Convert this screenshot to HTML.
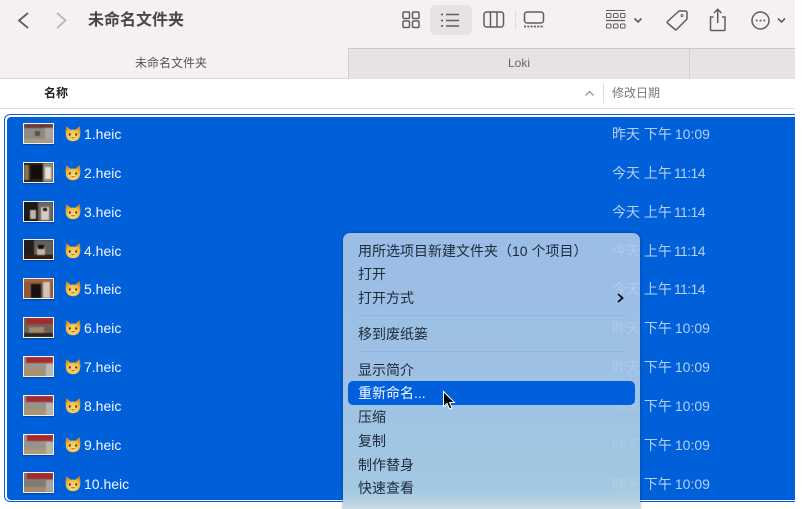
<!DOCTYPE html>
<html lang="zh">
<head>
<meta charset="utf-8">
<title>未命名文件夹</title>
<style>
html,body{margin:0;padding:0;background:#fff}
body{position:relative;width:802px;height:509px;overflow:hidden;font-family:"Liberation Sans","Noto Sans CJK SC",sans-serif;color:#222}
.a{position:absolute;white-space:nowrap}
#win{position:absolute;left:0;top:0;width:795px;height:509px;background:#fff;overflow:hidden}
#bar{left:0;top:0;width:795px;height:48px;background:#f6f1f1}
#tabs{left:0;top:48px;width:795px;height:31px;background:#f6f1f1;border-bottom:1px solid #dcd9d9;box-sizing:border-box}
.tab2{top:48px;height:31px;background:#e7e3e3;border-top:1px solid #c9c6c6;border-left:1px solid #d2cfcf;box-sizing:border-box}
#sel{left:4px;top:114px;width:800px;height:388px;border:1px solid #0a5fd6;border-radius:6px;box-sizing:border-box}
#blue{left:7px;top:117px;width:788px;height:383px;background:#0060d9;border-radius:4px 0 0 4px}
.t{position:absolute;left:84px;color:#f2f6fc;font-size:14px;line-height:20px}
.d{position:absolute;left:612px;color:#b4cff0;font-size:14px;line-height:20px;white-space:nowrap}
.d b{font-weight:400;margin-left:3px}
.d u{text-decoration:none;margin-left:2px;letter-spacing:-.6px}
.th{position:absolute;left:23px;width:31px;height:21px;box-sizing:border-box;border:1px solid #f1f1f1;box-shadow:0 1px 1px rgba(0,0,50,.35);overflow:hidden}
.th i{position:absolute;display:block;filter:blur(.6px)}
.c{position:absolute;left:65px;width:16px;height:17px}
#menu{left:343px;top:233px;width:297px;height:290px;border-radius:7px;background:linear-gradient(#9bbde6 0,#9dc0e4 45%,#a2c8e2 88%,#b1d0e2 92%,#d8e1e6 97%,#dde3e6 100%);box-shadow:0 0 3px rgba(0,0,60,.35)}
.m{position:absolute;left:358px;font-size:14px;line-height:20px;color:#1d2a3a;white-space:nowrap}
.g{position:absolute;left:612px;width:27px;overflow:hidden;color:#aecbe9;font-size:14px;line-height:20px;white-space:nowrap}
.sep{position:absolute;left:358px;width:267px;height:1px;background:#93b6e0}
svg{position:absolute;overflow:visible}
</style>
</head>
<body>
<div id="win">
<div class="a" id="bar"></div>
<div class="a" id="tabs"></div>
<div class="a tab2" style="left:348px;width:342px"></div>
<div class="a tab2" style="left:689px;width:106px"></div>

<svg style="left:0;top:0" width="795" height="48" fill="none" stroke="#5f5d5d" stroke-width="1.5">
<path d="M28 13 L19 20.5 L28 28" stroke-width="1.8"/>
<path d="M57 13 L65.5 20.5 L57 28" stroke="#b5b3b3" stroke-width="1.8"/>
<rect x="430" y="5" width="42" height="30" rx="6" fill="#e7e3e3" stroke="none"/>
<rect x="403" y="12" width="6.5" height="6.5" rx="1.2"/><rect x="412.5" y="12" width="6.5" height="6.5" rx="1.2"/>
<rect x="403" y="21" width="6.5" height="6.5" rx="1.2"/><rect x="412.5" y="21" width="6.5" height="6.5" rx="1.2"/>
<path d="M446 14.5H459M446 20.500H459M446 26H459"/>
<path d="M441 14.500h2M441 20.500h2M441 26h2" stroke-width="1.800"/>
<rect x="484" y="12" width="19.500" height="15" rx="2.500"/><path d="M490.500 12v15M497 12v15"/>
<path d="M515.500 10v20" stroke="#e2dede" stroke-width="1"/>
<rect x="524.500" y="12" width="19" height="11" rx="2.500"/>
<path d="M524 26.500h20" stroke-width="1.800" stroke-dasharray="2 1.300"/>
<path d="M606 10.500h19" stroke-width="1"/>
<rect x="606.500" y="13.500" width="4.500" height="4" rx=".8" stroke-width="1"/><rect x="613.500" y="13.500" width="4.500" height="4" rx=".8" stroke-width="1"/><rect x="620.500" y="13.500" width="4.500" height="4" rx=".8" stroke-width="1"/>
<path d="M606 20.500h19" stroke-width="1.200"/>
<rect x="606.500" y="24" width="4.500" height="4" rx=".8" stroke-width="1"/><rect x="613.500" y="24" width="4.500" height="4" rx=".8" stroke-width="1"/><rect x="620.500" y="24" width="4.500" height="4" rx=".8" stroke-width="1"/>
<path d="M634.500 18.500l3.500 3.500 3.500-3.500" stroke-width="1.600"/>
<path d="M667.500 21.500L679 11h6.500a1.500 1.500 0 0 1 1.500 1.500v6.500L676.500 29.500a1 1 0 0 1-1.400 0L667.500 23a1 1 0 0 1 0-1.500z" stroke-linejoin="round"/>
<circle cx="682" cy="15.500" r="1" stroke-width=".9"/>
<path d="M713.500 17h-3v12.500a1 1 0 0 0 1 1h12.500a1 1 0 0 0 1-1V17h-3M717.700 23V9.500M714 13l3.700-3.700 3.700 3.700"/>
<circle cx="760.500" cy="20.500" r="8.500"/>
<circle cx="756.700" cy="20.500" r="1" fill="#5f5d5d" stroke="none"/><circle cx="760.500" cy="20.500" r="1" fill="#5f5d5d" stroke="none"/><circle cx="764.300" cy="20.500" r="1" fill="#5f5d5d" stroke="none"/>
<path d="M778 18.500l3.500 3.500 3.500-3.500" stroke-width="1.600"/>
</svg>

<div class="a" style="left:88px;top:10px;font-size:16px;line-height:22px;font-weight:700;color:#484646">未命名文件夹</div>
<div class="a" style="left:135px;top:54px;font-size:12px;line-height:18px;color:#555">未命名文件夹</div>
<div class="a" style="left:508px;top:54px;font-size:12px;line-height:18px;color:#666">Loki</div>

<div class="a" style="left:44px;top:84px;font-size:12px;line-height:18px;font-weight:700;color:#222">名称</div>
<div class="a" style="left:612px;top:84px;font-size:12px;line-height:18px;color:#777">修改日期</div>
<div class="a" style="left:603px;top:83px;width:1px;height:20px;background:#dedede"></div>
<svg style="left:585px;top:90px" width="10" height="7" fill="none" stroke="#8a8a8a" stroke-width="1.200"><path d="M.500 5.500L4.500 1.500L8.500 5.500"/></svg>
<div class="a" style="left:0;top:108px;width:795px;height:1px;background:#dfdfdf"></div>

<div class="a" id="sel"></div>
<div class="a" id="blue"></div>

<div class="th" style="top:123px;background:#8f8a85"><i style="left:0;top:0;width:29px;height:4px;background:#6d3a38"></i><i style="left:21px;top:4px;width:8px;height:12px;background:#a9a5a0"></i><i style="left:0;top:15px;width:29px;height:4px;background:#b09a80"></i><i style="left:11px;top:7px;width:5px;height:5px;background:#55504c"></i></div>
<div class="th" style="top:162px;background:#2b2622"><i style="left:7px;top:2px;width:11px;height:14px;background:#100d0b"></i><i style="left:0;top:2px;width:5px;height:15px;background:#8a7150"></i><i style="left:19px;top:0;width:10px;height:19px;background:#8d8880"></i><i style="left:21px;top:4px;width:6px;height:12px;background:#e6dfd2"></i></div>
<div class="th" style="top:201px;background:#1c1a18"><i style="left:14px;top:0;width:15px;height:19px;background:#6a6866"></i><i style="left:6px;top:8px;width:6px;height:9px;background:#c0b4a8"></i><i style="left:17px;top:5px;width:8px;height:13px;background:#d6cbbf"></i><i style="left:19px;top:6px;width:4px;height:3px;background:#111"></i></div>
<div class="th" style="top:239px;background:#201e1c"><i style="left:10px;top:0;width:19px;height:15px;background:#615f5e"></i><i style="left:13px;top:7px;width:8px;height:10px;background:#c8b4a8"></i><i style="left:14px;top:5px;width:6px;height:4px;background:#0c0c0c"></i><i style="left:0;top:15px;width:29px;height:4px;background:#3a1c10"></i></div>
<div class="th" style="top:278px;background:#8f5a3c"><i style="left:7px;top:5px;width:10px;height:14px;background:#17120f"></i><i style="left:19px;top:1px;width:7px;height:18px;background:#cfc6b8"></i><i style="left:0;top:0;width:29px;height:3px;background:#a8633f"></i></div>
<div class="th" style="top:317px;background:#6f6358"><i style="left:2px;top:0;width:27px;height:6px;background:#a52a2e"></i><i style="left:5px;top:9px;width:15px;height:7px;background:#a4886a"></i><i style="left:0;top:15px;width:29px;height:4px;background:#2c2622"></i></div>
<div class="th" style="top:356px;background:#9c958d"><i style="left:2px;top:0;width:27px;height:6px;background:#a72c32"></i><i style="left:0;top:12px;width:20px;height:7px;background:#a98f6c"></i><i style="left:22px;top:7px;width:7px;height:12px;background:#bdb9b4"></i></div>
<div class="th" style="top:395px;background:#98928a"><i style="left:2px;top:0;width:27px;height:6px;background:#a52b30"></i><i style="left:0;top:13px;width:22px;height:6px;background:#ab9470"></i><i style="left:22px;top:7px;width:7px;height:12px;background:#b9b5b0"></i></div>
<div class="th" style="top:434px;background:#98928a"><i style="left:3px;top:0;width:26px;height:6px;background:#a52b30"></i><i style="left:0;top:14px;width:24px;height:5px;background:#b19a78"></i><i style="left:22px;top:7px;width:7px;height:12px;background:#b9b5b0"></i></div>
<div class="th" style="top:472px;background:#827a72"><i style="left:3px;top:0;width:26px;height:6px;background:#a52b30"></i><i style="left:0;top:14px;width:24px;height:5px;background:#a38b6c"></i><i style="left:22px;top:7px;width:7px;height:12px;background:#a9a5a0"></i></div>

<svg width="0" height="0" style="position:absolute"><defs><radialGradient id="fur" cx=".5" cy=".7" r=".7"><stop offset="0" stop-color="#fbdc7c"/><stop offset=".6" stop-color="#f2bd45"/><stop offset="1" stop-color="#c98a28"/></radialGradient><g id="cat"><path d="M1.500 1L5.500 4.800Q8 4.200 10.500 4.800L14.500 1Q15.800 6 15.200 10Q14.500 16 8 16.300Q1.500 16 .8 10Q.2 6 1.500 1z" fill="url(#fur)"/><ellipse cx="4.800" cy="9.500" rx="1" ry="1.200" fill="#4a3318"/><ellipse cx="11.200" cy="9.500" rx="1" ry="1.200" fill="#4a3318"/><path d="M6.500 12.200L8 13L9.500 12.200" stroke="#7a4a1e" stroke-width=".7" fill="none"/></g></defs></svg>
<svg class="c" style="top:125px"><use href="#cat"/></svg>
<svg class="c" style="top:164px"><use href="#cat"/></svg>
<svg class="c" style="top:203px"><use href="#cat"/></svg>
<svg class="c" style="top:242px"><use href="#cat"/></svg>
<svg class="c" style="top:280px"><use href="#cat"/></svg>
<svg class="c" style="top:319px"><use href="#cat"/></svg>
<svg class="c" style="top:358px"><use href="#cat"/></svg>
<svg class="c" style="top:397px"><use href="#cat"/></svg>
<svg class="c" style="top:436px"><use href="#cat"/></svg>
<svg class="c" style="top:475px"><use href="#cat"/></svg>

<div class="t" style="top:124px">1.heic</div>
<div class="t" style="top:163px">2.heic</div>
<div class="t" style="top:202px">3.heic</div>
<div class="t" style="top:241px">4.heic</div>
<div class="t" style="top:279px">5.heic</div>
<div class="t" style="top:318px">6.heic</div>
<div class="t" style="top:357px">7.heic</div>
<div class="t" style="top:396px">8.heic</div>
<div class="t" style="top:435px">9.heic</div>
<div class="t" style="top:474px">10.heic</div>

<div class="d" style="top:124px">昨天 下午<b>10:09</b></div>
<div class="d" style="top:163px">今天 上午<u>11:14</u></div>
<div class="d" style="top:202px">今天 上午<u>11:14</u></div>
<div class="d" style="top:241px">今天 上午<u>11:14</u></div>
<div class="d" style="top:279px">今天 上午<u>11:14</u></div>
<div class="d" style="top:318px">昨天 下午<b>10:09</b></div>
<div class="d" style="top:357px">昨天 下午<b>10:09</b></div>
<div class="d" style="top:396px">昨天 下午<b>10:09</b></div>
<div class="d" style="top:435px">昨天 下午<b>10:09</b></div>
<div class="d" style="top:474px">昨天 下午<b>10:09</b></div>

<div class="a" id="menu"></div>
<div class="g" style="top:241px">今天</div>
<div class="g" style="top:279px">今天</div>
<div class="g" style="top:318px">昨天</div>
<div class="g" style="top:357px">昨天</div>
<div class="g" style="top:396px;color:#a8cbea">昨天</div>
<div class="g" style="top:435px;color:#a8cce6">昨天</div>
<div class="g" style="top:474px;color:#aed0e6">昨天</div>

<div class="m" style="top:241px">用所选项目新建文件夹（10 个项目）</div>
<div class="m" style="top:264px">打开</div>
<div class="m" style="top:288px">打开方式</div>
<svg style="left:617px;top:293px" width="8" height="10" fill="none" stroke="#0a0a0a" stroke-width="1.800"><path d="M1 1L5.500 5L1 9"/></svg>
<div class="sep" style="top:315px"></div>
<div class="m" style="top:324px">移到废纸篓</div>
<div class="sep" style="top:351px"></div>
<div class="m" style="top:360px">显示简介</div>
<div class="a" style="left:348px;top:381px;width:287px;height:24px;background:#0060dc;border-radius:5px"></div>
<div class="m" style="top:383px;color:#f4f8fd">重新命名...</div>
<div class="m" style="top:407px">压缩</div>
<div class="m" style="top:431px">复制</div>
<div class="m" style="top:455px">制作替身</div>
<div class="m" style="top:478px">快速查看</div>
<svg style="left:442px;top:390px" width="16" height="21"><path d="M1.500 1.500V16.500L5 13.300L7.500 19L10 18L7.600 12.500H12.500z" fill="#000" stroke="#fff" stroke-width="1"/></svg>
</div>
</body>
</html>
